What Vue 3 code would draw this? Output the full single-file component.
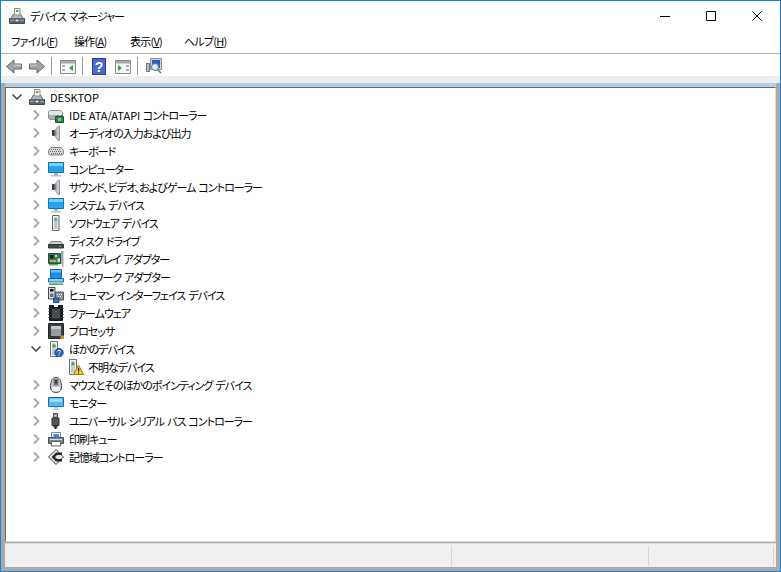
<script setup>
const icons = {
  host: [
    ['M.5 10.500h15v5H.5z', '#5f6a72', '#434c52'],
    ['M2 10.500l2-4h8l2 4z', '#aeb8bf', '#66717a'],
    ['M5.500.5h5.500v6.500H5.500z', '#f4f6f2', '#8b9488'],
    ['M7 2h2.500v2H7z', '#4fae5c', 'none'],
    ['M1 12h14v1H1z', '#98a3ab', 'none'],
    ['M6 11h4v3H6z', '#e2e6e9', '#434c52'],
  ],
  ide: [
    ['M1.500 3.500h11l2 2v6l-1 1h-12l-1-1v-7z', '#e3e6e9', '#8d9297'],
    ['M1 8h13v4H1z', '#aab1b7', 'none'],
    ['M7.500 9.500h8v6h-8z', '#2f7d4a', '#1f5a34'],
    ['M10 11h3v3h-3z', '#7fd094', 'none'],
    ['M9 9h1v-1h-1zM13 9h1v-1h-1z', '#1f5a34', 'none'],
  ],
  audio: [
    ['M4.500 5.500h2v5h-2z', '#3d4145', '#33373a'],
    ['M7 5l3.500-4h1v15h-1L7 11z', '#c3c9cd', '#8f979c'],
    ['M7 5.500h1.500v5H7z', '#7e858a', 'none'],
  ],
  keyboard: [
    ['M3 4.500h10l2.500 3v3l-1 1.500H1.500l-1-1.500v-3z', '#d8dadc', '#7a7d80'],
    ['M3 6h1v1H3zM5 6h1v1H5zM7 6h1v1H7zM9 6h1v1H9zM11 6h1v1h-1zM2 8h1v1H2zM4 8h1v1H4zM6 8h1v1H6zM8 8h1v1H8zM10 8h1v1h-1zM12 8h1v1h-1zM3 10h1v1H3zM5 10h1v1H5zM7 10h1v1H7zM9 10h1v1H9zM11 10h1v1h-1zM13 10h1v1h-1z', '#62666a', 'none'],
  ],
  monitor: [
    ['M.5 1.500h15v10H.5z', '#2aa2ea', '#0f74bb'],
    ['M1 2h14v3H1z', '#7ccbf5', 'none'],
    ['M6 12h4v2H6z', '#a8b6c0', 'none'],
    ['M3 14h10v1.500H3z', '#b9c4cc', 'none'],
  ],
  chipstick: [
    ['M4.500.5h6.500v15H4.500z', '#eef0ec', '#62686c'],
    ['M6 2.500h3.500v11.500H6z', '#bfc5c9', 'none'],
    ['M7.700 2.500l-1.700 3h3.500z', '#3fa34d', 'none'],
  ],
  disk: [
    ['M3 8.500h10l2 3H1z', '#c9ccce', '#8c8f92'],
    ['M.5 11.500h15v3.500H.5z', '#45484c', '#34363a'],
    ['M11 13h2v1h-2z', '#45d14f', 'none'],
  ],
  gpu: [
    ['M.5 2.500h12v10H.5z', '#2e7a58', '#24543e'],
    ['M2 4h3.500v3.500H2z', '#16201c', 'none'],
    ['M7 4h2v2H7zM9.500 7.500H12V11H9.500z', '#cfe0cd', 'none'],
    ['M2 9h6v2H2z', '#d7a93a', 'none'],
    ['M1 13h9v1.500H1z', '#6b9c84', 'none'],
    ['M13 0h2.500v15.500H14V13h-1z', '#a2a8ad', 'none'],
  ],
  network: [
    ['M2.500 .5h11v9h-11z', '#1f8fe4', '#0c67ad'],
    ['M3 1h10v2.500H3z', '#67bef2', 'none'],
    ['M.5 9.500h15v3.500H.5z', '#8fcdf2', '#0c67ad'],
    ['M4 13.500h8v1H4z', '#c3ccd2', 'none'],
    ['M1 14.500h14v1.500H1z', '#35b24a', 'none'],
  ],
  hid: [
    ['M.5.5h6.500v11.500H.5z', '#d9dcdf', '#444a4f'],
    ['M2 2h3.500v2.500H2z', '#14171a', 'none'],
    ['M2 6.500h3.500v3.500H2z', '#6c7479', 'none'],
    ['M7.500 5h8v8h-8z', '#8d969c', '#50585d'],
    ['M9 7h1v1H9zM11 7h1v1h-1zM13 7h1v1h-1zM10 9h1v1h-1zM12 9h1v1h-1zM9 11h1v1H9z', '#f0f2f3', 'none'],
    ['M5.500 11h5.500v4.500H5.500z', '#2f72ba', '#1f4f85'],
  ],
  firmware: [
    ['M1.500.5H5.500v2h5v-2h4v15h-13z', '#1f2124', '#0d0e10'],
    ['M0 3h1.500v1H0zM0 6h1.500v1H0zM0 9h1.500v1H0zM0 12h1.500v1H0zM14.500 3H16v1h-1.500zM14.500 6H16v1h-1.500zM14.500 9H16v1h-1.500zM14.500 12H16v1h-1.500z', '#888', 'none'],
    ['M4 4h8v9.500H4z', '#484c50', 'none'],
  ],
  cpu: [
    ['M.5.5h15v15H.5z', '#3a3d40', '#222426'],
    ['M3 3h10v10H3z', '#9a9ea1', 'none'],
    ['M3 3h10v3H3z', '#c6c9cb', 'none'],
    ['M12.500 12.500H16V16h-3.500z', '#d28a2a', 'none'],
  ],
  other: [
    ['M2.500.5h7v15h-7z', '#f0f2ee', '#6c7276'],
    ['M4 2.500h4v11.500H4z', '#c4cacd', 'none'],
    ['M6 2.500l-2 3.500h4z', '#3fa34d', 'none'],
    ['M11 7.500a4.200 4.200 0 1 0 .01 0z', '#2a68b5', '#1c4d8c'],
    ['M9.500 10.500c0-1.500 3-1.500 3 0 0 1-1.500 1-1.500 2M10.500 14h1', 'none', '#fff'],
  ],
  unknown: [
    ['M1.500.5h7v15h-7z', '#f0f2ee', '#6c7276'],
    ['M3 2.500h4v11.500H3z', '#c4cacd', 'none'],
    ['M5 2.500l-2 3.500h4z', '#3fa34d', 'none'],
    ['M10.500 6l5 9.500h-10z', '#f6d11c', '#9c7c14'],
    ['M10 9h1.200v3.500H10zM10 13.500h1.200v1H10z', '#222', 'none'],
  ],
  mouse: [
    ['M8 .5c3.500 0 5 3 5.500 8 .4 4-1.500 7-5.500 7s-5.900-3-5.500-7c.5-5 2-8 5.500-8z', '#c8cdd1', '#3f4448'],
    ['M5.500 2h5v6.500h-5z', '#6d7479', 'none'],
    ['M7.500 3h1v3.500h-1z', '#101214', 'none'],
    ['M4 10h8v4H4z', '#f1f3f4', 'none'],
  ],
  monitor2: [
    ['M.5 2.500h15v9H.5z', '#58b9ee', '#1572b6'],
    ['M2 4h12v3H2z', '#a5dcf8', 'none'],
    ['M6 12h4v2H6z', '#c5d3dc', 'none'],
    ['M4 14h8v1H4z', '#c5d3dc', 'none'],
  ],
  usb: [
    ['M5.500.5h4v4h-4z', '#7d8286', '#4c5054'],
    ['M4 5h7v7.500H4z', '#50545a', '#33363a'],
    ['M5.500 12.500h4v2h-1v1.500h-2v-1.500h-1z', '#2a2d30', 'none'],
    ['M6.500 2h2v1.500h-2z', '#e6e8ea', 'none'],
  ],
  printer: [
    ['M3.500 1.500h9v5h-9z', '#f7f8f9', '#808589'],
    ['M.5 6.500h15v6h-15z', '#7f868b', '#484c50'],
    ['M3.500 10.500h9v4.500h-9z', '#fff', '#5f6468'],
    ['M2 8h12v1H2z', '#d5d9dc', 'none'],
    ['M5.500 3H11v3.500H5.500z', '#2f8fdc', 'none'],
  ],
  memory: [
    ['M8 .5L15.500 8 8 15.500.5 8z', '#e4e6e8', '#3a3e42'],
    ['M8 3.500L3.500 8 8 12.500h6V10H9L7 8l2-2h5V3.500z', '#25282b', 'none'],
  ],
}

const devices = [
  { icon: 'ide', latin: 'IDE ATA/ATAPI ', label: 'コントローラー' },
  { icon: 'audio', label: 'オーディオの入力および出力' },
  { icon: 'keyboard', label: 'キーボード' },
  { icon: 'monitor', label: 'コンピューター' },
  { icon: 'audio', label: 'サウンド、ビデオ、およびゲーム コントローラー' },
  { icon: 'monitor', label: 'システム デバイス' },
  { icon: 'chipstick', label: 'ソフトウェア デバイス' },
  { icon: 'disk', label: 'ディスク ドライブ' },
  { icon: 'gpu', label: 'ディスプレイ アダプター' },
  { icon: 'network', label: 'ネットワーク アダプター' },
  { icon: 'hid', label: 'ヒューマン インターフェイス デバイス' },
  { icon: 'firmware', label: 'ファームウェア' },
  { icon: 'cpu', label: 'プロセッサ' },
  { icon: 'other', label: 'ほかのデバイス', open: true },
  { icon: 'unknown', label: '不明なデバイス', child: true },
  { icon: 'mouse', label: 'マウスとそのほかのポインティング デバイス' },
  { icon: 'monitor2', label: 'モニター' },
  { icon: 'usb', label: 'ユニバーサル シリアル バス コントローラー' },
  { icon: 'printer', label: '印刷キュー' },
  { icon: 'memory', label: '記憶域コントローラー' },
]

const menus = [
  { name: 'ファイル', key: 'F', cls: 'm1' },
  { name: '操作', key: 'A', cls: 'm2' },
  { name: '表示', key: 'V', cls: 'm3' },
  { name: 'ヘルプ', key: 'H', cls: 'm4' },
]
</script>

<template>
  <div class="window">
    <header class="titlebar">
      <svg class="title-icon" viewBox="0 0 16 16" width="16" height="16">
        <path v-for="(p, i) in icons.host" :key="i" :d="p[0]" :fill="p[1]" :stroke="p[2]" />
      </svg>
      <span class="title">デバイス マネージャー</span>
      <div class="controls">
        <div class="ctl">
          <svg width="10" height="10" viewBox="0 0 10 10"><path d="M0 5.500h10" stroke="#000" /></svg>
        </div>
        <div class="ctl">
          <svg width="10" height="10" viewBox="0 0 10 10"><path d="M.5.500h9v9h-9z" stroke="#000" fill="none" /></svg>
        </div>
        <div class="ctl">
          <svg width="10" height="10" viewBox="0 0 10 10"><path d="M.5.500l9 9M9.500.500l-9 9" stroke="#000" fill="none" /></svg>
        </div>
      </div>
    </header>

    <nav class="menubar">
      <span v-for="m in menus" :key="m.key" class="menu" :class="m.cls">{{ m.name }}(<u>{{ m.key }}</u>)</span>
    </nav>

    <div class="toolbar">
      <svg class="tb back" width="16" height="15" viewBox="0 0 16 15">
        <path d="M.5 7.500L8 1v4h7.500v5H8v4z" fill="#a3a5a5" stroke="#676969" />
        <path d="M8 5.500h7v1.500H8z" fill="#c6c8c8" />
      </svg>
      <svg class="tb fwd" width="16" height="15" viewBox="0 0 16 15">
        <path d="M15.500 7.500L8 1v4H.5v5H8v4z" fill="#a3a5a5" stroke="#676969" />
        <path d="M1 5.500h7v1.500H1z" fill="#c6c8c8" />
      </svg>
      <i class="sep s1"></i>
      <svg class="tb pane1" width="16" height="16" viewBox="0 0 16 16">
        <path d="M.5 2.500h15v13H.5z" fill="#f4f6f7" stroke="#858b8e" />
        <path d="M1 3h14v2.500H1z" fill="#a2abb1" />
        <path d="M2 7h3v2H2zM2 11h3v2H2z" fill="#9fb0ba" />
        <path d="M13 7v6l-4-3z" fill="#2f9e44" />
      </svg>
      <i class="sep s2"></i>
      <svg class="tb help" width="14" height="17" viewBox="0 0 14 17">
        <rect width="14" height="17" fill="#26409f" />
        <rect x="1" y="1" width="12" height="15" fill="#4a6cc9" />
        <text x="7" y="13.500" text-anchor="middle" class="q">?</text>
      </svg>
      <svg class="tb pane2" width="16" height="16" viewBox="0 0 16 16">
        <path d="M.5 2.500h15v13H.5z" fill="#f4f6f7" stroke="#858b8e" />
        <path d="M1 3h14v2.500H1z" fill="#a2abb1" />
        <path d="M11 7h3v2h-3zM11 11h3v2h-3z" fill="#9fb0ba" />
        <path d="M3 7v6l4-3z" fill="#2f9e44" />
      </svg>
      <i class="sep s3"></i>
      <svg class="tb scan" width="16" height="16" viewBox="0 0 16 16">
        <path d="M4.500.5h11v11h-11z" fill="#c9d2da" stroke="#8e969c" />
        <path d="M6 2h8v8H6z" fill="#2a5fbf" />
        <path d="M.5 5.500h3v8h-3z" fill="#b8bec2" stroke="#6c7276" />
        <circle cx="9" cy="9" r="3.500" fill="#d9ecf8" stroke="#5e7486" />
        <path d="M11.500 11.500l3.500 3.500" stroke="#5e7486" stroke-width="1.500" />
      </svg>
    </div>

    <div class="strip"></div>

    <main class="main">
      <div class="bluebar"></div>
      <section class="tree">
        <div class="row lv0">
          <svg class="twisty" width="16" height="16" viewBox="0 0 16 16">
            <path d="M3.500 5.500L8 10l4.500-4.500" fill="none" stroke="#404040" stroke-width="1.500" />
          </svg>
          <svg class="icon" width="16" height="16" viewBox="0 0 16 16">
            <path v-for="(p, i) in icons.host" :key="i" :d="p[0]" :fill="p[1]" :stroke="p[2]" />
          </svg>
          <span class="label latin">DESKTOP</span>
        </div>
        <div v-for="d in devices" :key="d.label" class="row" :class="d.child ? 'lv2' : 'lv1'">
          <svg class="twisty" width="16" height="16" viewBox="0 0 16 16">
            <path v-if="d.open" d="M3.500 5.500L8 10l4.500-4.500" fill="none" stroke="#404040" stroke-width="1.500" />
            <path v-else-if="!d.child" d="M6 3.500l4.500 4.500L6 12.500" fill="none" stroke="#a6a6a6" stroke-width="1.800" />
          </svg>
          <svg class="icon" width="16" height="16" viewBox="0 0 16 16">
            <path v-for="(p, i) in icons[d.icon]" :key="i" :d="p[0]" :fill="p[1]" :stroke="p[2]" />
          </svg>
          <span class="label"><span v-if="d.latin" class="latin">{{ d.latin }}</span>{{ d.label }}</span>
        </div>
      </section>
      <footer class="status">
        <div class="cell c1"></div>
        <div class="cell c2"></div>
        <div class="cell c3"></div>
      </footer>
    </main>
  </div>
</template>

<style>
html, body { margin: 0; background: #fff; }
</style>

<style scoped>
.window {
  width: 781px;
  height: 572px;
  box-sizing: border-box;
  border: 1px solid #1883d7;
  display: flex;
  flex-direction: column;
  background: #fff;
  color: #000;
  font-family: "Noto Sans CJK JP", "Noto Sans", sans-serif;
  font-size: 11px;
  letter-spacing: -1px;
  word-spacing: 1.500px;
  font-feature-settings: "palt";
  overflow: hidden;
}
.latin { letter-spacing: 0; word-spacing: 0; white-space: pre; }
.titlebar {
  height: 30px;
  display: flex;
  align-items: center;
  padding-left: 8px;
  flex: none;
}
.title-icon { flex: none; }
.title { margin-left: 5px; }
.controls { margin-left: auto; display: flex; height: 100%; }
.ctl {
  width: 46px;
  display: flex;
  align-items: center;
  justify-content: center;
}
.menubar {
  height: 22px;
  box-sizing: content-box;
  flex: none;
  display: flex;
  align-items: flex-start;
  border-bottom: 1px solid #b0b0b8;
}
.menu { white-space: nowrap; margin-top: 2px; letter-spacing: -0.75px; }
.menu u { text-underline-offset: 1px; }
.m1 { margin-left: 10px; width: 63px; }
.m2 { width: 56px; }
.m3 { width: 54px; }
.toolbar {
  height: 22px;
  box-sizing: border-box;
  padding-top: 2px;
  flex: none;
  display: flex;
  align-items: center;
}
.tb { flex: none; display: block; }
.back { margin-left: 5px; }
.fwd { margin-left: 7px; }
.sep { width: 1px; height: 18px; background: #9b9b9b; flex: none; }
.s1 { margin-left: 6px; }
.pane1 { margin-left: 8px; }
.s2 { margin-left: 6px; }
.help { margin-left: 9px; }
.pane2 { margin-left: 9px; }
.s3 { margin-left: 6px; }
.scan { margin-left: 8px; }
.q { fill: #fff; font: bold 14px "Liberation Sans", sans-serif; letter-spacing: 0; }
.strip { height: 7px; flex: none; background: #eeeeee; }
.main {
  flex: 1;
  min-height: 0;
  background: #a9a9a9;
  padding: 0 4px 4px;
  display: flex;
  flex-direction: column;
}
.bluebar { height: 4px; flex: none; background: #b4cde6; }
.tree {
  flex: 1;
  min-height: 0;
  background: #fff;
  border-top: 1px solid #696969;
  border-left: 1px solid #696969;
  border-right: 1px solid #dddddd;
  border-bottom: 1px solid #dddddd;
}
.row {
  height: 18px;
  display: flex;
  align-items: center;
  white-space: nowrap;
}
.lv0 { padding-left: 3px; }
.lv1 { padding-left: 22px; }
.lv2 { padding-left: 42px; }
.lv2 .label { margin-left: 4px; }
.twisty { flex: none; }
.icon { flex: none; margin-left: 4px; }
.label { margin-left: 5px; }
.status {
  height: 24px;
  box-sizing: border-box;
  flex: none;
  margin-top: 1px;
  border-top: 1px solid #dddddd;
  background: #f0f0f0;
  display: flex;
  padding: 2px 0 1px;
}
.cell { border-right: 1px solid #d6d6d6; flex: none; }
.c1 { width: 446px; }
.c2 { width: 196px; }
.c3 { width: 124px; }
</style>
